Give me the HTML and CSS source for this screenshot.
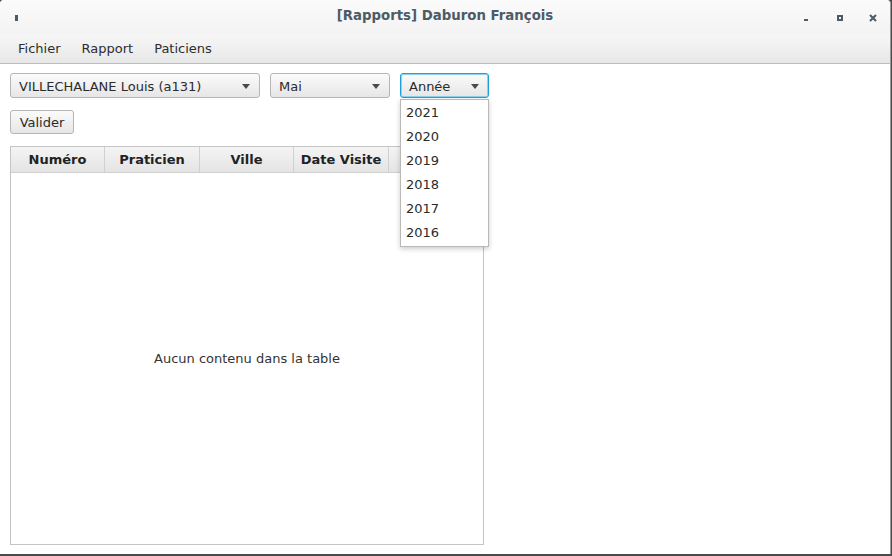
FILE: index.html
```html
<!DOCTYPE html>
<html lang="fr">
<head>
<meta charset="utf-8">
<title>[Rapports] Daburon François</title>
<link rel="stylesheet" href="styles.css">
</head>
<body>
<div class="window">
  <div class="titlebar">
    <span class="app-icon"></span>
    <span class="title">[Rapports] Daburon François</span>
    <div class="controls">
      <svg class="ctl" width="8" height="8" viewBox="0 0 8 8"><rect x="1" y="5" width="4" height="2" fill="#4c5b65"/></svg>
      <svg class="ctl" width="8" height="8" viewBox="0 0 8 8"><rect x="1" y="1" width="6" height="6" fill="#4c5b65"/><rect x="3" y="3" width="2" height="2" fill="#f4f4f4"/></svg>
      <svg class="ctl" width="8" height="8" viewBox="0 0 8 8"><path d="M1 1 L7 7 M7 1 L1 7" stroke="#4c5b65" stroke-width="2"/></svg>
    </div>
  </div>
  <div class="menubar">
    <span class="menu">Fichier</span>
    <span class="menu">Rapport</span>
    <span class="menu">Paticiens</span>
  </div>
  <div class="content">
    <div class="row">
      <div class="combo combo-med"><span class="combo-text">VILLECHALANE Louis (a131)</span><span class="arrow"></span></div>
      <div class="combo combo-month"><span class="combo-text">Mai</span><span class="arrow"></span></div>
      <div class="combo combo-year focused"><span class="combo-text">Année</span><span class="arrow"></span>
        <ul class="popup">
          <li>2021</li>
          <li>2020</li>
          <li>2019</li>
          <li>2018</li>
          <li>2017</li>
          <li>2016</li>
        </ul>
      </div>
    </div>
    <div class="row">
      <button class="btn">Valider</button>
    </div>
    <div class="table">
      <div class="thead">
        <div class="th th-a">Numéro</div>
        <div class="th th-b">Praticien</div>
        <div class="th th-a">Ville</div>
        <div class="th th-b">Date Visite</div>
        <div class="th th-last"></div>
      </div>
      <div class="tbody">Aucun contenu dans la table</div>
    </div>
  </div>
</div>
</body>
</html>
```
FILE: styles.css
```css
* { box-sizing: border-box; }
html, body { margin: 0; padding: 0; }
body {
  width: 892px;
  height: 556px;
  background: #4a4a4a;
  font-family: "DejaVu Sans", "Liberation Sans", sans-serif;
  font-size: 13px;
  color: #333;
  overflow: hidden;
}
.window {
  width: 891px;
  height: 554px;
  background: #fff;
  border-right: 1px solid #9a9a9a;
  border-radius: 4px 4px 0 0;
  display: flex;
  flex-direction: column;
}
.titlebar {
  height: 34px;
  background: linear-gradient(#fbfbfb, #f3f3f3);
  display: flex;
  align-items: center;
  position: relative;
  border-radius: 4px 4px 0 0;
}
.app-icon {
  width: 3px;
  height: 6px;
  background: #4c5b65;
  margin-left: 15px;
  margin-top: 1px;
}
.title {
  position: absolute;
  left: 0;
  right: 0;
  text-align: center;
  font-weight: bold;
  font-size: 13.3px;
  color: #4c5b65;
  top: 8px;
}
.controls {
  margin-left: auto;
  display: flex;
  gap: 25px;
  margin-right: 13px;
  margin-top: 1px;
}
.ctl { display: block; }
.menubar {
  height: 30px;
  background: linear-gradient(#f7f7f7, #e7e7e7);
  border-bottom: 1px solid #bcbcbc;
  display: flex;
  align-items: center;
  padding-left: 10px;
}
.menu {
  padding: 0 8px;
  margin-right: 5px;
  color: #2d2d2d;
  font-size: 13px;
}
.content {
  flex: 1;
  padding: 9px 0 9px 10px;
  display: flex;
  flex-direction: column;
  gap: 12px;
}
.row {
  display: flex;
  gap: 10px;
  align-items: flex-start;
}
.combo {
  position: relative;
  height: 25px;
  border: 1px solid #b6b6b6;
  border-radius: 3px;
  background: linear-gradient(#fbfbfb, #e6e6e6);
  display: flex;
  align-items: center;
  padding-left: 8px;
  padding-right: 9px;
  padding-top: 1px;
}
.combo-med { width: 250px; }
.combo-month { width: 120px; }
.combo-year { width: 89px; padding-left: 8px; }
.combo.focused {
  border: 1px solid #1ea0d6;
  box-shadow: inset 0 0 0 1px #8fd2ee;
}
.combo-text {
  flex: 1;
  color: #2b2b2b;
  white-space: nowrap;
}
.arrow {
  width: 0;
  height: 0;
  border-left: 4px solid transparent;
  border-right: 4px solid transparent;
  border-top: 5px solid #4a4a4a;
}
.popup {
  position: absolute;
  left: -1px;
  top: 25px;
  width: 89px;
  margin: 0;
  padding: 1px 0;
  list-style: none;
  background: #fff;
  border: 1px solid #b8b8b8;
  box-shadow: 0 2px 5px rgba(0,0,0,0.2);
  z-index: 5;
}
.popup li {
  height: 24px;
  line-height: 24px;
  padding-left: 5px;
  color: #2b2b2b;
}
.btn {
  height: 24px;
  width: 64px;
  border: 1px solid #b6b6b6;
  border-radius: 3px;
  background: linear-gradient(#fbfbfb, #e6e6e6);
  font-family: inherit;
  font-size: 13px;
  color: #2b2b2b;
  padding: 0;
}
.table {
  width: 474px;
  flex: 1;
  border: 1px solid #c4c4c4;
  display: flex;
  flex-direction: column;
}
.thead {
  height: 26px;
  display: flex;
  background: linear-gradient(#f4f4f4, #e4e4e4);
  border-bottom: 1px solid #cfcfcf;
}
.th {
  border-right: 1px solid #d0d0d0;
  display: flex;
  align-items: center;
  justify-content: center;
  font-weight: bold;
  color: #222;
}
.th-a { width: 94px; }
.th-b { width: 95px; }
.th-last { border-right: none; flex: 1; }
.tbody {
  flex: 1;
  display: flex;
  align-items: center;
  justify-content: center;
  color: #333;
}
```
